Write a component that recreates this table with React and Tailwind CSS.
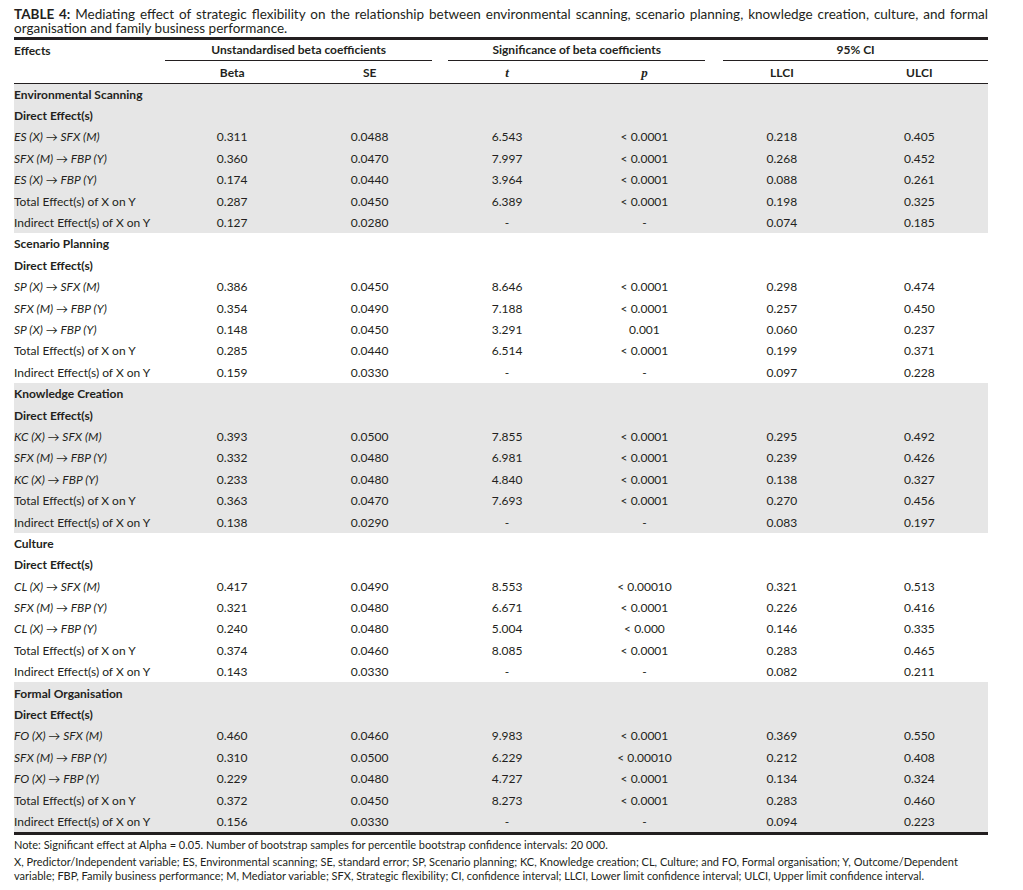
import React from "react";

const sections = [
  {
    name: "Environmental Scanning",
    shaded: true,
    abbr: "ES",
    rows: [
      ["0.311", "0.0488", "6.543", "< 0.0001", "0.218", "0.405"],
      ["0.360", "0.0470", "7.997", "< 0.0001", "0.268", "0.452"],
      ["0.174", "0.0440", "3.964", "< 0.0001", "0.088", "0.261"],
      ["0.287", "0.0450", "6.389", "< 0.0001", "0.198", "0.325"],
      ["0.127", "0.0280", "-", "-", "0.074", "0.185"],
    ],
  },
  {
    name: "Scenario Planning",
    shaded: false,
    abbr: "SP",
    rows: [
      ["0.386", "0.0450", "8.646", "< 0.0001", "0.298", "0.474"],
      ["0.354", "0.0490", "7.188", "< 0.0001", "0.257", "0.450"],
      ["0.148", "0.0450", "3.291", "0.001", "0.060", "0.237"],
      ["0.285", "0.0440", "6.514", "< 0.0001", "0.199", "0.371"],
      ["0.159", "0.0330", "-", "-", "0.097", "0.228"],
    ],
  },
  {
    name: "Knowledge Creation",
    shaded: true,
    abbr: "KC",
    rows: [
      ["0.393", "0.0500", "7.855", "< 0.0001", "0.295", "0.492"],
      ["0.332", "0.0480", "6.981", "< 0.0001", "0.239", "0.426"],
      ["0.233", "0.0480", "4.840", "< 0.0001", "0.138", "0.327"],
      ["0.363", "0.0470", "7.693", "< 0.0001", "0.270", "0.456"],
      ["0.138", "0.0290", "-", "-", "0.083", "0.197"],
    ],
  },
  {
    name: "Culture",
    shaded: false,
    abbr: "CL",
    rows: [
      ["0.417", "0.0490", "8.553", "< 0.00010", "0.321", "0.513"],
      ["0.321", "0.0480", "6.671", "< 0.0001", "0.226", "0.416"],
      ["0.240", "0.0480", "5.004", "< 0.000", "0.146", "0.335"],
      ["0.374", "0.0460", "8.085", "< 0.0001", "0.283", "0.465"],
      ["0.143", "0.0330", "-", "-", "0.082", "0.211"],
    ],
  },
  {
    name: "Formal Organisation",
    shaded: true,
    abbr: "FO",
    rows: [
      ["0.460", "0.0460", "9.983", "< 0.0001", "0.369", "0.550"],
      ["0.310", "0.0500", "6.229", "< 0.00010", "0.212", "0.408"],
      ["0.229", "0.0480", "4.727", "< 0.0001", "0.134", "0.324"],
      ["0.372", "0.0450", "8.273", "< 0.0001", "0.283", "0.460"],
      ["0.156", "0.0330", "-", "-", "0.094", "0.223"],
    ],
  },
];

const grid = "grid grid-cols-[149.5px_repeat(6,minmax(0,1fr))] items-center h-[21.4px]";

function Row({ label, labelClass = "", values }) {
  return (
    <div className={grid}>
      <div className={`whitespace-nowrap pt-[1px] ${labelClass}`}>{label}</div>
      {values
        ? values.map((v, i) => (
            <div key={i} className="text-center whitespace-nowrap pt-[1px]">
              {v}
            </div>
          ))
        : null}
    </div>
  );
}

function Section({ s }) {
  const labels = [
    `${s.abbr} (X) \u2192 SFX (M)`,
    `SFX (M) \u2192 FBP (Y)`,
    `${s.abbr} (X) \u2192 FBP (Y)`,
  ];
  return (
    <div className={s.shaded ? "bg-[#e6e6e6]" : ""}>
      <Row label={s.name} labelClass="font-bold" />
      <Row label="Direct Effect(s)" labelClass="font-bold" />
      {labels.map((l, i) => (
        <Row key={i} label={l} labelClass="italic" values={s.rows[i]} />
      ))}
      <Row label="Total Effect(s) of X on Y" values={s.rows[3]} />
      <Row label="Indirect Effect(s) of X on Y" values={s.rows[4]} />
    </div>
  );
}

export default function App() {
  return (
    <div className="bg-white min-h-[890px] w-[1023px] text-[#231f20] font-['Lato',sans-serif]">
      <div className="ml-[14px] w-[974px] pt-[7px]">
        <div className="text-[13.5px] leading-[14px]">
          <div className="text-justify [text-align-last:justify]">
            <span className="font-bold">TABLE 4:</span> Mediating effect of strategic flexibility on the
            relationship between environmental scanning, scenario planning, knowledge creation, culture, and formal
          </div>
          <div>organisation and family business performance.</div>
        </div>

        <div className="mt-[2px] border-t-[3px] border-[#231f20] text-[12px]">
          {/* header row 1 */}
          <div className="grid grid-cols-[149.5px_repeat(6,minmax(0,1fr))] h-[21px] font-bold">
            <div className="flex items-center">Effects</div>
            <div className="col-span-2 ml-[1.5px] mr-[6px] border-b border-[#231f20] flex items-center justify-center">
              Unstandardised beta coefficients
            </div>
            <div className="col-span-2 ml-[10px] mr-[8px] border-b border-[#231f20] flex items-center justify-center">
              Significance of beta coefficients
            </div>
            <div className="col-span-2 ml-[10px] border-b border-[#231f20] flex items-center justify-center">
              95% CI
            </div>
          </div>
          {/* header row 2 */}
          <div className="grid grid-cols-[149.5px_repeat(6,minmax(0,1fr))] h-[22.5px] items-center font-bold border-b-[1.5px] border-[#231f20]">
            <div></div>
            <div className="text-center pt-[2px]">Beta</div>
            <div className="text-center pt-[2px]">SE</div>
            <div className="text-center italic font-['Liberation_Serif',serif] text-[13px] pt-[2px]">t</div>
            <div className="text-center italic font-['Liberation_Serif',serif] text-[13px] pt-[2px]">p</div>
            <div className="text-center pt-[2px]">LLCI</div>
            <div className="text-center pt-[2px]">ULCI</div>
          </div>

          {sections.map((s) => (
            <Section key={s.name} s={s} />
          ))}

          <div className="border-t-[3px] border-[#231f20]"></div>
        </div>

        <div className="text-[11px] leading-[14px] mt-[3px]">
          <p>
            Note: Significant effect at Alpha = 0.05. Number of bootstrap samples for percentile bootstrap confidence
            intervals: 20 000.
          </p>
          <p className="mt-[3px]">
            X, Predictor/Independent variable; ES, Environmental scanning; SE, standard error; SP, Scenario planning; KC,
            Knowledge creation; CL, Culture; and FO, Formal organisation; Y, Outcome/Dependent variable; FBP, Family
            business performance; M, Mediator variable; SFX, Strategic flexibility; CI, confidence interval; LLCI, Lower
            limit confidence interval; ULCI, Upper limit confidence interval.
          </p>
        </div>
      </div>
    </div>
  );
}
